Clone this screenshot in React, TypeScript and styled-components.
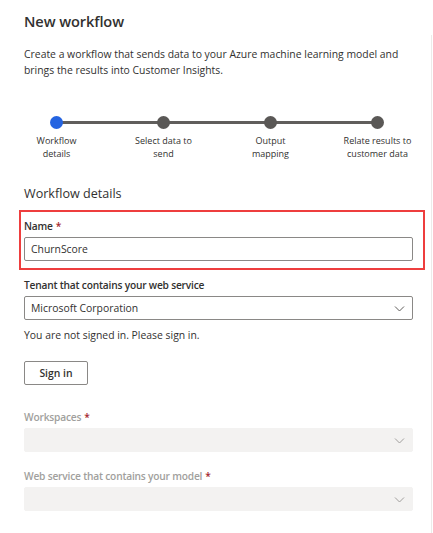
import React from "react";
import styled, { createGlobalStyle } from "styled-components";

const Global = createGlobalStyle`
  html, body { margin: 0; padding: 0; background: #ffffff; }
  body { font-family: "Open Sans", "Noto Sans", sans-serif; color: #323130; }
`;

const Page = styled.div`
  width: 433px;
  height: 533px;
  position: relative;
  box-sizing: border-box;
  overflow: hidden;

  &::after {
    content: "";
    position: absolute;
    top: 35px;
    bottom: 0;
    left: 431px;
    width: 1px;
    background: #edebe9;
  }
`;

const Panel = styled.div`
  width: 432px;
  box-sizing: border-box;
  padding: 11px 20px 0 24px;
  display: flex;
  flex-direction: column;
`;

const Title = styled.h1`
  margin: 0;
  font-size: 14.6px;
  line-height: 20px;
  font-weight: 600;
  color: #323130;
  letter-spacing: -0.1px;
`;

const Description = styled.p`
  margin: 15px 0 0 0;
  font-size: 10.4px;
  line-height: 16px;
  color: #323130;
  width: 380px;
`;

const Stepper = styled.div`
  margin-top: 38px;
  position: relative;
  display: grid;
  grid-template-columns: repeat(4, 107px);
  margin-left: -21px;
`;

const Step = styled.div`
  display: flex;
  flex-direction: column;
  align-items: center;
  position: relative;
`;

const Connector = styled.div`
  position: absolute;
  top: 5px;
  left: 56px;
  width: 103px;
  height: 3px;
  background: #605e5c;
`;

const Dot = styled.div<{ $active?: boolean }>`
  width: 13px;
  height: 13px;
  border-radius: 50%;
  background: ${(p) => (p.$active ? "#2564e1" : "#5a5856")};
  position: relative;
  z-index: 1;
`;

const StepLabel = styled.div`
  margin-top: 5px;
  font-size: 9px;
  line-height: 13px;
  text-align: center;
  color: #323130;
`;

const SectionTitle = styled.h2`
  margin: 25px 0 0 0;
  font-size: 12.6px;
  line-height: 18px;
  font-weight: 400;
  color: #323130;
`;

const Highlight = styled.div`
  margin: 7px 0 0 -5px;
  width: 406px;
  box-sizing: border-box;
  border: 2px solid #ee3e3e;
  padding: 7px 10px 7px 3px;
`;

const Field = styled.div<{ $gap?: number }>`
  display: flex;
  flex-direction: column;
  margin-top: ${(p) => p.$gap ?? 0}px;
`;

const Label = styled.label<{ $disabled?: boolean }>`
  font-size: 10.2px;
  line-height: 15px;
  font-weight: 600;
  letter-spacing: -0.2px;
  color: ${(p) => (p.$disabled ? "#a19f9d" : "#323130")};
  margin-bottom: 3px;
`;

const Req = styled.span`
  color: #a4262c;
  margin-left: 3px;
`;

const TextBox = styled.div`
  width: 389px;
  height: 24px;
  box-sizing: border-box;
  border: 1px solid #8a8886;
  border-radius: 2px;
  display: flex;
  align-items: center;
  padding-left: 6px;
  font-size: 10.4px;
  color: #323130;
`;

const Select = styled.div<{ $disabled?: boolean }>`
  width: 389px;
  height: 24px;
  box-sizing: border-box;
  border: 1px solid ${(p) => (p.$disabled ? "#f3f2f1" : "#8a8886")};
  background: ${(p) => (p.$disabled ? "#f3f2f1" : "#ffffff")};
  border-radius: 2px;
  display: flex;
  align-items: center;
  justify-content: space-between;
  padding: 0 7px 0 6px;
  font-size: 10.4px;
  color: #323130;
`;

const Chevron = styled.svg<{ $disabled?: boolean }>`
  width: 11px;
  height: 11px;
  stroke: ${(p) => (p.$disabled ? "#a19f9d" : "#605e5c")};
  fill: none;
  stroke-width: 1;
`;

const Note = styled.div`
  margin-top: 8px;
  font-size: 10.4px;
  line-height: 15px;
  color: #323130;
`;

const Button = styled.button`
  margin-top: 18px;
  width: 64px;
  height: 24px;
  box-sizing: border-box;
  border: 1px solid #8a8886;
  border-radius: 2px;
  background: #ffffff;
  font-family: inherit;
  font-size: 10.4px;
  font-weight: 600;
  color: #323130;
  padding: 0;
`;

const ChevronIcon = ({ disabled }: { disabled?: boolean }) => (
  <Chevron $disabled={disabled} viewBox="0 0 11 11">
    <path d="M1 3.5 L5.5 8 L10 3.5" />
  </Chevron>
);

const steps = [
  ["Workflow", "details"],
  ["Select data to", "send"],
  ["Output", "mapping"],
  ["Relate results to", "customer data"],
];

export default function App() {
  return (
    <>
      <Global />
      <Page>
        <Panel>
          <Title>New workflow</Title>
          <Description>
            Create a workflow that sends data to your Azure machine learning model and brings the
            results into Customer Insights.
          </Description>
          <Stepper>
            {steps.map((s, i) => (
              <Step key={i}>
                {i < 3 && <Connector />}
                <Dot $active={i === 0} />
                <StepLabel>
                  {s[0]}
                  <br />
                  {s[1]}
                </StepLabel>
              </Step>
            ))}
          </Stepper>
          <SectionTitle>Workflow details</SectionTitle>
          <Highlight>
            <Field>
              <Label>
                Name<Req>*</Req>
              </Label>
              <TextBox>ChurnScore</TextBox>
            </Field>
          </Highlight>
          <Field $gap={8}>
            <Label>Tenant that contains your web service</Label>
            <Select>
              <span>Microsoft Corporation</span>
              <ChevronIcon />
            </Select>
          </Field>
          <Note>You are not signed in. Please sign in.</Note>
          <div>
            <Button>Sign in</Button>
          </div>
          <Field $gap={25}>
            <Label $disabled>
              Workspaces<Req>*</Req>
            </Label>
            <Select $disabled>
              <span />
              <ChevronIcon disabled />
            </Select>
          </Field>
          <Field $gap={17}>
            <Label $disabled>
              Web service that contains your model<Req>*</Req>
            </Label>
            <Select $disabled>
              <span />
              <ChevronIcon disabled />
            </Select>
          </Field>
        </Panel>
      </Page>
    </>
  );
}
